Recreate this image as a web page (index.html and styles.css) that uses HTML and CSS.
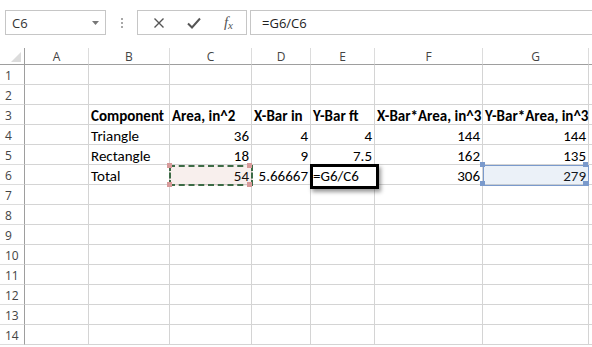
FILE: index.html
```html
<!DOCTYPE html>
<html lang="en">
<head>
    <meta charset="UTF-8">
    <title>Centroid sheet</title>
    <link rel="stylesheet" href="styles.css">
</head>
<body>
    <div class="formula-bar">
        <div class="name-box">
            <span>C6</span>
            <svg class="caret" width="7" height="4" viewBox="0 0 7 4"><path d="M0 0h7L3.5 4z" fill="#777"/></svg>
        </div>
        <div class="grip">
            <i></i><i></i><i></i>
        </div>
        <div class="fx-buttons">
            <svg width="12" height="12" viewBox="0 0 12 12"><path d="M1.5 1.5l9 9M10.5 1.5l-9 9" stroke="#555" stroke-width="1.4" fill="none"/></svg>
            <svg width="14" height="12" viewBox="0 0 14 12"><path d="M1 6.5l4 4L13 1.5" stroke="#555" stroke-width="2" fill="none"/></svg>
            <span class="fx">f<sub>x</sub></span>
        </div>
        <div class="formula-input">=G6/C6</div>
    </div>

    <div class="sheet">
        <div class="grid">
            <div class="corner"><svg width="10" height="10" viewBox="0 0 10 10"><path d="M10 0v10H0z" fill="#dcdcdc"/></svg></div>
            <div class="col-head">A</div>
            <div class="col-head">B</div>
            <div class="col-head">C</div>
            <div class="col-head">D</div>
            <div class="col-head">E</div>
            <div class="col-head">F</div>
            <div class="col-head">G</div>
            <div class="col-head edge"></div>
        </div>
        <div class="grid body" id="rows"></div>

        <div class="copy-box"></div>
        <div class="ref-box"></div>
        <div class="edit-box">=G6/C6</div>
    </div>

    <script>
        // contenu des cellules, colonnes A à G
        const data = {
            3: ['', 'Component', 'Area, in^2', 'X-Bar in', 'Y-Bar ft', 'X-Bar*Area, in^3', 'Y-Bar*Area, in^3'],
            4: ['', 'Triangle', 36, 4, 4, 144, 144],
            5: ['', 'Rectangle', 18, 9, 7.5, 162, 135],
            6: ['', 'Total', 54, '5.66667', '', 306, 279]
        };

        const rows = document.getElementById('rows');
        for (let r = 1; r <= 14; r++) {
            const head = document.createElement('div');
            head.className = 'row-head';
            head.textContent = r;
            rows.appendChild(head);
            for (let c = 0; c < 8; c++) {
                const cell = document.createElement('div');
                cell.className = 'cell';
                const v = data[r] ? data[r][c] : undefined;
                if (v !== undefined && v !== '') {
                    cell.textContent = v;
                    if (r === 3) cell.classList.add('bold');
                    if (typeof v === 'number' || (r === 6 && c === 3)) cell.classList.add('num');
                }
                if (c === 7) cell.classList.add('edge');
                rows.appendChild(cell);
            }
        }
    </script>
</body>
</html>
```

FILE: styles.css
```css
body {
    margin: 0;
    width: 592px;
    height: 347px;
    overflow: hidden;
    background: #fff;
    font-family: "Segoe UI", "Open Sans", sans-serif;
}

.formula-bar {
    display: flex;
    align-items: stretch;
    height: 25px;
    margin-top: 10px;
    padding-left: 5px;
}

.name-box {
    width: 101px;
    border: 1px solid #c6c6c6;
    box-sizing: border-box;
    display: flex;
    align-items: center;
    justify-content: space-between;
    padding: 0 6px 0 6px;
    font-size: 13px;
    color: #333;
}

.grip {
    width: 31px;
    display: flex;
    flex-direction: column;
    align-items: center;
    justify-content: center;
    gap: 2px;
}

.grip i {
    width: 2px;
    height: 2px;
    background: #a8a8a8;
}

.fx-buttons {
    width: 110px;
    border: 1px solid #c6c6c6;
    box-sizing: border-box;
    display: flex;
    align-items: center;
    justify-content: space-between;
    padding: 0 13px 0 15px;
}

.fx {
    font-family: "Liberation Serif", serif;
    font-style: italic;
    font-size: 15px;
    color: #555;
    line-height: 1;
}

.fx sub {
    font-size: 11px;
    vertical-align: -2px;
}

.formula-input {
    flex: 1;
    margin-left: 3px;
    border-top: 1px solid #c6c6c6;
    border-bottom: 1px solid #c6c6c6;
    border-left: 1px solid #c6c6c6;
    display: flex;
    align-items: center;
    padding-left: 11px;
    font-size: 13px;
    color: #222;
}

.sheet {
    position: relative;
    margin-top: 13px;
}

.grid {
    display: grid;
    grid-template-columns: 25px 64px 81px 82px 59px 64px 108px 106px 3px;
}

.corner,
.col-head {
    height: 17px;
    box-sizing: border-box;
    border-bottom: 1px solid #9e9e9e;
    border-right: 1px solid #dcdcdc;
    font-size: 12px;
    color: #444;
    text-align: center;
    line-height: 18px;
}

.corner {
    border-right-color: #9e9e9e;
    display: flex;
    align-items: flex-end;
    justify-content: flex-end;
    padding: 0 3px 2px 0;
}

.col-head.edge {
    border-right: none;
}

.row-head {
    height: 20px;
    box-sizing: border-box;
    border-right: 1px solid #9e9e9e;
    border-bottom: 1px solid #dcdcdc;
    font-size: 12px;
    color: #444;
    padding-left: 5px;
    line-height: 21px;
}

.cell {
    height: 20px;
    box-sizing: border-box;
    border-right: 1px solid #d4d4d4;
    border-bottom: 1px solid #d4d4d4;
    font-family: Carlito, Lato, sans-serif;
    font-size: 15px;
    color: #000;
    padding: 2px 2px 0;
    line-height: 19px;
    white-space: nowrap;
}

.cell.edge {
    border-right: none;
}

.bold {
    font-weight: bold;
}

.num {
    text-align: right;
}

.copy-box {
    position: absolute;
    left: 169px;
    top: 117px;
    width: 84px;
    height: 21px;
    box-sizing: border-box;
    background: rgba(200, 120, 110, 0.12);
    border: 2px dashed #3d6b46;
}

.copy-box::before,
.ref-box::before {
    content: "";
    position: absolute;
    width: 5px;
    height: 5px;
    background: #d79a9a;
    top: -4px;
    left: -4px;
    box-shadow: 80px 0 0 #d79a9a, 0 19px 0 #d79a9a, 80px 19px 0 #d79a9a;
}

.ref-box {
    position: absolute;
    left: 483px;
    top: 117px;
    width: 106px;
    height: 21px;
    box-sizing: border-box;
    background: rgba(120, 160, 210, 0.15);
    border: 1px solid #7a9acc;
}

.ref-box::before {
    background: #7a9acc;
    box-shadow: 103px 0 0 #7a9acc, 0 19px 0 #7a9acc, 103px 19px 0 #7a9acc;
}

.edit-box {
    position: absolute;
    left: 310px;
    top: 116px;
    width: 69px;
    height: 25px;
    box-sizing: border-box;
    background: #fff;
    border: 3px solid #000;
    box-shadow: 2px 3px 4px rgba(0, 0, 0, 0.4);
    font-family: Carlito, Lato, sans-serif;
    font-size: 15px;
    line-height: 19px;
}
```
